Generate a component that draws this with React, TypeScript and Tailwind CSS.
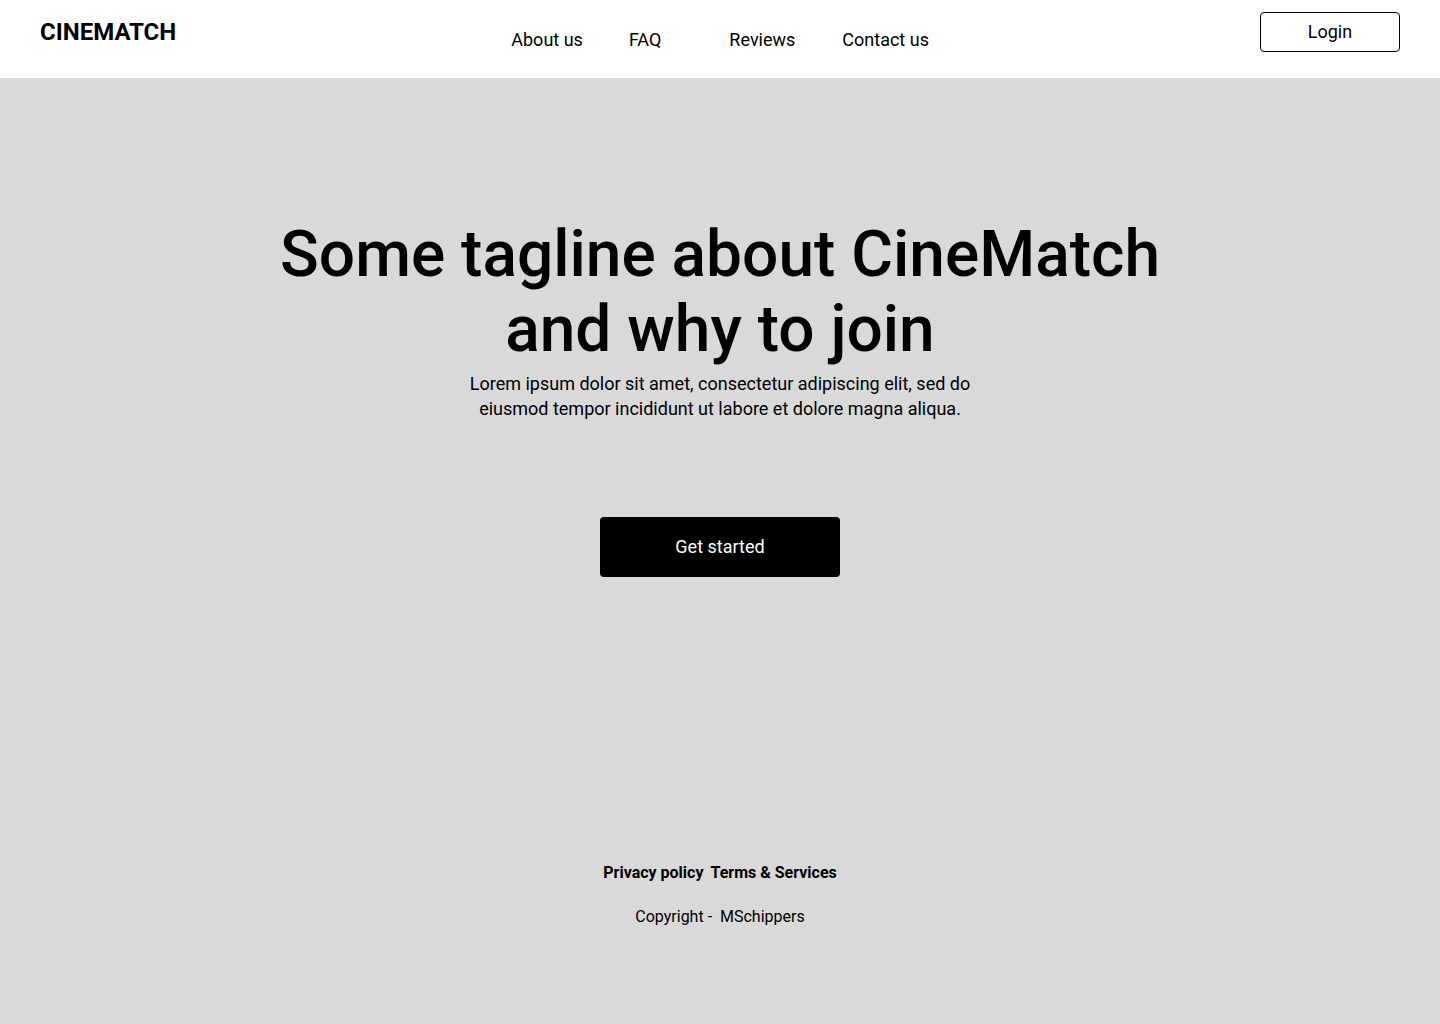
import React from "react";

export default function App() {
  return (
    <div className="min-h-screen w-full bg-[#d9d9d9] text-black" style={{ fontFamily: "Roboto, 'Noto Sans', sans-serif" }}>
      <header className="h-[78px] bg-white flex items-start px-10">
        <div className="pt-[18px] text-[24px] font-bold leading-[28px]">CINEMATCH</div>
        <nav className="flex items-start pt-[29px] ml-[335px] text-[18px] leading-[21px]">
          <a className="block">About us</a>
          <a className="block ml-[46px]">FAQ</a>
          <a className="block ml-[68px]">Reviews</a>
          <a className="block ml-[47px]">Contact us</a>
        </nav>
        <button className="ml-auto mt-3 w-[140px] h-10 pb-[2px] border border-black rounded-[4px] bg-white text-[18px] leading-[21px]">
          Login
        </button>
      </header>
      <main className="flex flex-col items-center">
        <h1 className="mt-[139px] text-[64px] leading-[75px] font-medium text-center">
          Some tagline about CineMatch
          <br />
          and why to join
        </h1>
        <p className="mt-[4px] w-[510px] text-center text-[18px] leading-[25px]">
          Lorem ipsum dolor sit amet, consectetur adipiscing elit, sed do eiusmod tempor incididunt ut labore et dolore magna aliqua.
        </p>
        <button className="mt-[96px] w-[240px] h-[60px] pb-[1px] bg-black text-white rounded-[4px] text-[18px] leading-[21px]">
          Get started
        </button>
        <div className="mt-[286px] flex gap-[7px] text-[16px] leading-[19px] font-bold">
          <a>Privacy policy</a>
          <a>Terms &amp; Services</a>
        </div>
        <div className="mt-[25px] text-[16px] leading-[19px]">Copyright -&nbsp; MSchippers</div>
      </main>
    </div>
  );
}
